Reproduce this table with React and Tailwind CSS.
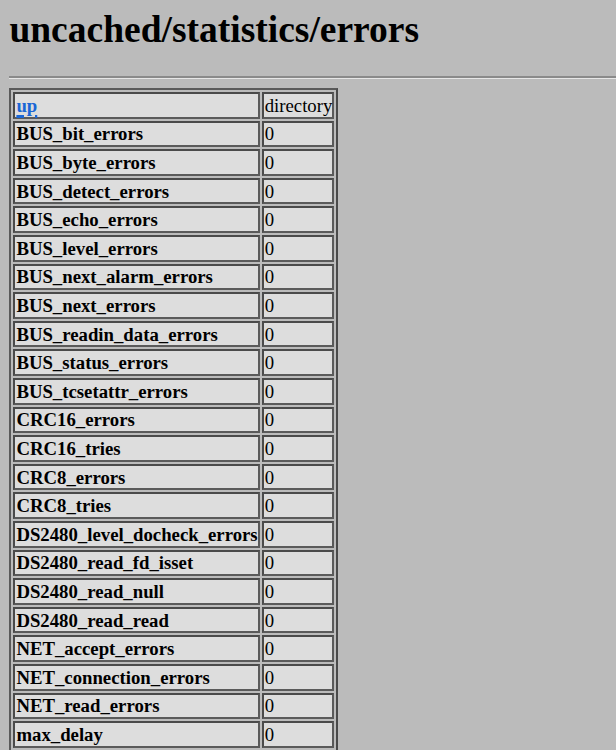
import React from 'react';

const ROWS = [
  'BUS_bit_errors',
  'BUS_byte_errors',
  'BUS_detect_errors',
  'BUS_echo_errors',
  'BUS_level_errors',
  'BUS_next_alarm_errors',
  'BUS_next_errors',
  'BUS_readin_data_errors',
  'BUS_status_errors',
  'BUS_tcsetattr_errors',
  'CRC16_errors',
  'CRC16_tries',
  'CRC8_errors',
  'CRC8_tries',
  'DS2480_level_docheck_errors',
  'DS2480_read_fd_isset',
  'DS2480_read_null',
  'DS2480_read_read',
  'NET_accept_errors',
  'NET_connection_errors',
  'NET_read_errors',
  'max_delay',
];

const cell =
  'bg-[#dddddd] border-2 border-t-[#4a4a4a] border-l-[#4a4a4a] border-b-[#5a5a5a] border-r-[#5a5a5a] pl-[1px] pr-0 py-0 h-[26.6px] leading-[21px] text-left align-middle whitespace-nowrap';

export default function App() {
  return (
    <div className="min-h-screen bg-[#bbbbbb] text-black font-['Liberation_Serif',_'Times_New_Roman',_serif] text-[18.75px] pt-[9.4px] pl-[9.4px] overflow-hidden">
      <h1 className="text-[37.5px] font-bold leading-[41.5px]">uncached/statistics/errors</h1>

      <hr className="mt-[24.8px] mb-[9.4px] border-0 border-t-2 border-t-[#8a8a8a] border-b border-b-[#e6e6e6] w-[700px]" />

      <table className="border-separate border-spacing-[2.4px] border-2 border-t-[#5a5a5a] border-l-[#5a5a5a] border-b-[#4a4a4a] border-r-[#4a4a4a]">
        <tbody>
          <tr>
            <td className={cell + ' w-[245px]'}>
              <a href="#" className="font-bold text-[#1a66d6] underline underline-offset-[3px] decoration-[2.5px]">up</a>
            </td>
            <td className={cell}>directory</td>
          </tr>
          {ROWS.map((name) => (
            <tr key={name}>
              <td className={cell + ' font-bold'}>{name}</td>
              <td className={cell}>0</td>
            </tr>
          ))}
        </tbody>
      </table>
    </div>
  );
}
